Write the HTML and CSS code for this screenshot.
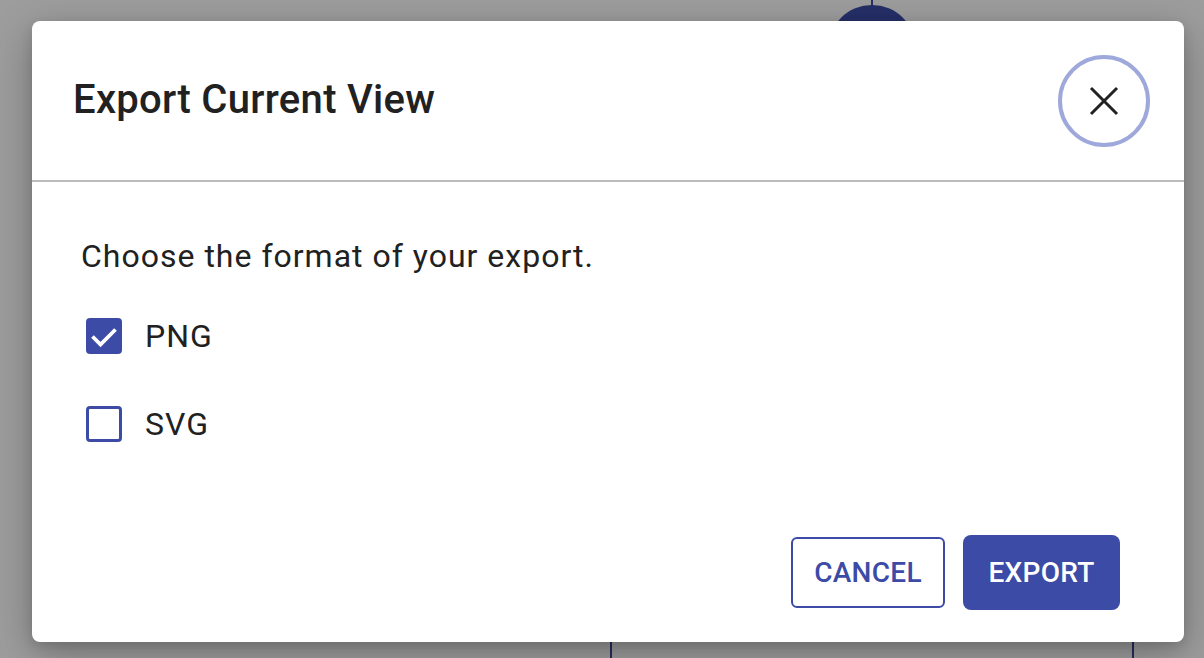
FILE: index.html
```html
<!DOCTYPE html>
<html>
<head>
<meta charset="utf-8">
<link rel="stylesheet" href="styles.css">
</head>
<body>
<div class="page">
  <div class="bg-stem"></div>
  <div class="bg-node"></div>
  <div class="bg-box"></div>
</div>
<div class="backdrop">
  <div class="dialog" role="dialog">
    <div class="dialog-header">
      <h1 class="dialog-title">Export Current View</h1>
      <button class="close-btn" aria-label="Close">
        <svg width="30" height="30" viewBox="0 0 30 30"><path d="M2 2 L28 28 M28 2 L2 28" stroke="#222" stroke-width="3" fill="none" stroke-linecap="butt"/></svg>
      </button>
    </div>
    <div class="dialog-body">
      <p class="prompt">Choose the format of your export.</p>
      <label class="option">
        <span class="checkbox checked">
          <svg width="36" height="36" viewBox="0 0 36 36"><path d="M6.5 18.5 L14.5 26.5 L29.5 11.5" stroke="#fff" stroke-width="3.8" fill="none"/></svg>
        </span>
        <span class="option-label">PNG</span>
      </label>
      <label class="option">
        <span class="checkbox"></span>
        <span class="option-label">SVG</span>
      </label>
    </div>
    <div class="dialog-actions">
      <button class="btn btn-outline">CANCEL</button>
      <button class="btn btn-primary">EXPORT</button>
    </div>
  </div>
</div>
</body>
</html>
```
FILE: styles.css
```css
html, body {
  margin: 0;
  padding: 0;
  width: 1204px;
  height: 658px;
  overflow: hidden;
  font-family: Roboto, "Liberation Sans", sans-serif;
}
.page {
  position: relative;
  width: 1204px;
  height: 658px;
  background: #9d9d9d;
}
.bg-stem {
  position: absolute;
  left: 871px;
  top: 0;
  width: 2px;
  height: 6px;
  background: #252f68;
}
.bg-node {
  position: absolute;
  left: 828px;
  top: 5px;
  width: 88px;
  height: 88px;
  border-radius: 50%;
  background: #252f68;
}
.bg-box {
  position: absolute;
  left: 610px;
  top: 620px;
  width: 520px;
  height: 38px;
  border-left: 2px solid #252f5e;
  border-right: 2px solid #252f5e;
}
.backdrop {
  position: absolute;
  inset: 0;
}
.dialog {
  position: absolute;
  left: 32px;
  top: 21px;
  width: 1152px;
  height: 621px;
  background: #fff;
  border-radius: 8px;
  box-shadow: 0 12px 40px rgba(0,0,0,0.28), 0 4px 12px rgba(0,0,0,0.12);
  display: flex;
  flex-direction: column;
}
.dialog-header {
  height: 159px;
  border-bottom: 2px solid #bcbcbc;
  display: flex;
  align-items: center;
  justify-content: space-between;
  padding: 0 34px 0 41px;
}
.dialog-title {
  margin: 0;
  font-size: 40px;
  font-weight: 500;
  color: #212121;
  letter-spacing: 0.3px;
  margin-top: -2px;
}
.close-btn {
  width: 92px;
  height: 92px;
  border-radius: 50%;
  border: 4px solid #9fa8da;
  background: #fff;
  display: flex;
  align-items: center;
  justify-content: center;
  padding: 0;
  margin-top: 1px;
}
.dialog-body {
  padding: 54px 0 0 49px;
  flex: 1;
}
.prompt {
  margin: 0 0 34px;
  font-size: 32px;
  color: #212121;
  letter-spacing: 1px;
  line-height: 40px;
}
.option {
  display: flex;
  align-items: center;
  gap: 23px;
  height: 52px;
  margin-bottom: 36px;
  padding-left: 5px;
}
.checkbox {
  width: 36px;
  height: 36px;
  box-sizing: border-box;
  border: 3.5px solid #3c4ba6;
  border-radius: 4px;
  display: flex;
  align-items: center;
  justify-content: center;
}
.checkbox.checked {
  background: #3c4ba6;
  border: none;
}
.option-label {
  font-size: 32px;
  color: #212121;
  letter-spacing: 1px;
}
.dialog-actions {
  display: flex;
  justify-content: flex-end;
  align-items: center;
  gap: 18px;
  padding: 0 64px 32px 0;
}
.btn {
  font-family: Roboto, "Liberation Sans", sans-serif;
  font-size: 28px;
  font-weight: 500;
  letter-spacing: 0.3px;
  border-radius: 6px;
  cursor: pointer;
  padding: 0;
}
.btn-outline {
  width: 154px;
  height: 71px;
  background: #fff;
  color: #3c4ba6;
  border: 2px solid #3c4ba6;
}
.btn-primary {
  width: 157px;
  height: 75px;
  background: #3c4ba6;
  color: #fff;
  border: none;
  border-radius: 8px;
}
```
